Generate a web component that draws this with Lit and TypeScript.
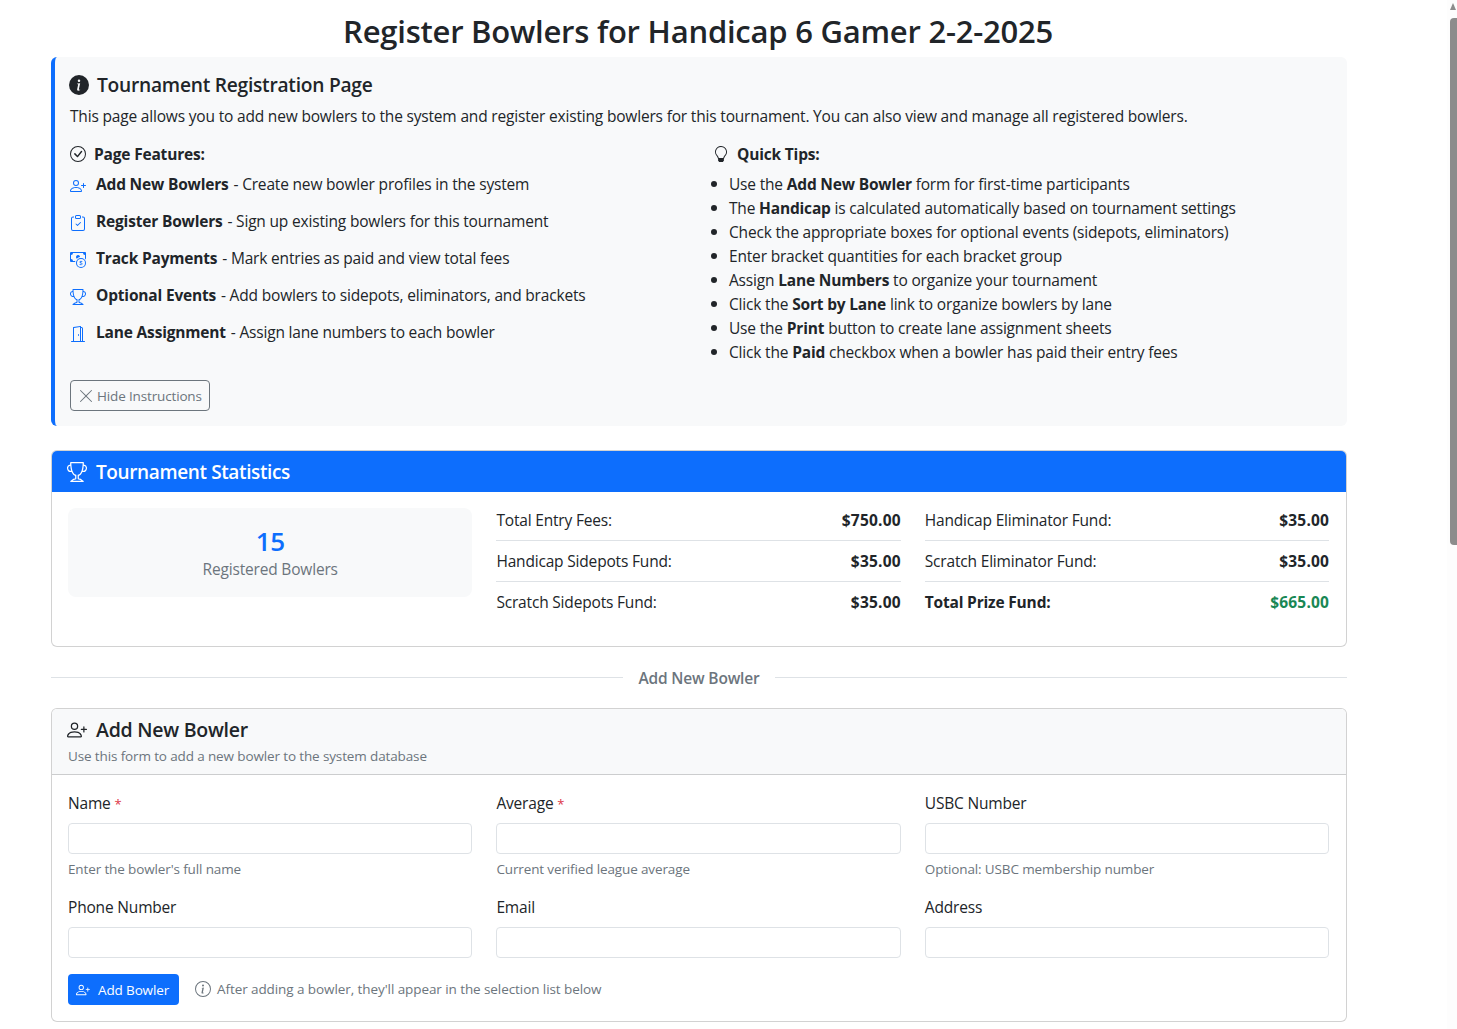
import { LitElement, html, css, svg } from "lit";
import { customElement } from "lit/decorators.js";

const P: Record<string, string[]> = {
  infoFill: ["M8 16A8 8 0 1 0 8 0a8 8 0 0 0 0 16zm.93-9.412-1 4.705c-.07.34.029.533.304.533.194 0 .487-.07.686-.246l-.088.416c-.287.346-.92.598-1.465.598-.703 0-1.002-.422-.808-1.319l.738-3.468c.064-.293.006-.399-.287-.47l-.451-.081.082-.381 2.29-.287zM8 5.5a1 1 0 1 1 0-2 1 1 0 0 1 0 2z"],
  check: ["M8 15A7 7 0 1 1 8 1a7 7 0 0 1 0 14zm0 1A8 8 0 1 0 8 0a8 8 0 0 0 0 16z", "M10.97 4.97a.235.235 0 0 0-.02.022L7.477 9.417 5.384 7.323a.75.75 0 0 0-1.06 1.06L6.97 11.03a.75.75 0 0 0 1.079-.02l3.992-4.99a.75.75 0 0 0-1.071-1.05z"],
  person: ["M6 8a3 3 0 1 0 0-6 3 3 0 0 0 0 6zm2-3a2 2 0 1 1-4 0 2 2 0 0 1 4 0zm4 8c0 1-1 1-1 1H1s-1 0-1-1 1-4 6-4 6 3 6 4zm-1-.004c-.001-.246-.154-.986-.832-1.664C9.516 10.68 8.289 10 6 10c-2.29 0-3.516.68-4.168 1.332-.678.678-.83 1.418-.832 1.664h10z", "M13.5 5a.5.5 0 0 1 .5.5V7h1.5a.5.5 0 0 1 0 1H14v1.5a.5.5 0 0 1-1 0V8h-1.5a.5.5 0 0 1 0-1H13V5.5a.5.5 0 0 1 .5-.5z"],
  clip: ["M10.854 7.146a.5.5 0 0 1 0 .708l-3 3a.5.5 0 0 1-.708 0l-1.5-1.5a.5.5 0 1 1 .708-.708L7.5 9.793l2.646-2.647a.5.5 0 0 1 .708 0z", "M4 1.5H3a2 2 0 0 0-2 2V14a2 2 0 0 0 2 2h10a2 2 0 0 0 2-2V3.5a2 2 0 0 0-2-2h-1v1h1a1 1 0 0 1 1 1V14a1 1 0 0 1-1 1H3a1 1 0 0 1-1-1V3.5a1 1 0 0 1 1-1h1v-1z", "M9.5 1a.5.5 0 0 1 .5.5v1a.5.5 0 0 1-.5.5h-3a.5.5 0 0 1-.5-.5v-1a.5.5 0 0 1 .5-.5h3zm-3-1A1.5 1.5 0 0 0 5 1.5v1A1.5 1.5 0 0 0 6.5 4h3A1.5 1.5 0 0 0 11 2.5v-1A1.5 1.5 0 0 0 9.5 0h-3z"],
  cash: ["M11 15a4 4 0 1 0 0-8 4 4 0 0 0 0 8zm5-4a5 5 0 1 1-10 0 5 5 0 0 1 10 0z", "M9.438 11.944c.047.596.518 1.06 1.363 1.116v.44h.375v-.443c.875-.061 1.386-.529 1.386-1.207 0-.618-.39-.936-1.09-1.1l-.296-.07v-1.2c.376.043.614.248.671.532h.658c-.047-.575-.54-1.024-1.329-1.073V8.5h-.375v.45c-.747.073-1.255.522-1.255 1.158 0 .562.378.92 1.007 1.066l.248.061v1.272c-.384-.058-.639-.27-.696-.563h-.668zm1.36-1.354c-.369-.085-.569-.26-.569-.522 0-.294.216-.514.572-.578v1.1h-.003zm.432.746c.449.104.655.272.655.569 0 .339-.257.571-.709.614v-1.195l.054.012z", "M1 0a1 1 0 0 0-1 1v8a1 1 0 0 0 1 1h4.083c.058-.344.145-.678.258-1H3a2 2 0 0 0-2-2V3a2 2 0 0 0 2-2h10a2 2 0 0 0 2 2v3.528c.38.34.717.728 1 1.154V1a1 1 0 0 0-1-1H1z", "M9.998 5.083 10 5a2 2 0 1 0-3.132 1.65 5.982 5.982 0 0 1 3.13-1.567z"],
  trophy: ["M2.5.5A.5.5 0 0 1 3 0h10a.5.5 0 0 1 .5.5c0 .538-.012 1.05-.034 1.536a3 3 0 1 1-1.133 5.89c-.79 1.865-1.878 2.777-2.833 3.011v2.173l1.425.356c.194.048.377.135.537.255L13.3 15.1a.5.5 0 0 1-.3.9H3a.5.5 0 0 1-.3-.9l1.838-1.379c.16-.12.343-.207.537-.255L6.5 13.11v-2.173c-.955-.234-2.043-1.146-2.833-3.012a3 3 0 1 1-1.132-5.89A33.076 33.076 0 0 1 2.5.5zm.099 2.54a2 2 0 0 0 .72 3.935c-.333-1.05-.588-2.346-.72-3.935zm10.083 3.935a2 2 0 0 0 .72-3.935c-.133 1.59-.388 2.885-.72 3.935zM3.504 1c.007.517.026 1.006.056 1.469.13 2.028.457 3.546.87 4.667C5.294 9.48 6.484 10 7 10a.5.5 0 0 1 .5.5v2.61a1 1 0 0 1-.757.97l-1.426.356a.5.5 0 0 0-.179.085L4.5 15h7l-.638-.479a.501.501 0 0 0-.18-.085l-1.425-.356a1 1 0 0 1-.757-.97V10.5A.5.5 0 0 1 9 10c.516 0 1.706-.52 2.57-2.864.413-1.12.74-2.64.87-4.667.03-.463.049-.952.056-1.469H3.504z"],
  door: ["M8.5 10c-.276 0-.5-.448-.5-1s.224-1 .5-1 .5.448.5 1-.224 1-.5 1z", "M10.828.122A.5.5 0 0 1 11 .5V1h.5A1.5 1.5 0 0 1 13 2.5V15h1.5a.5.5 0 0 1 0 1h-13a.5.5 0 0 1 0-1H3V1.5a.5.5 0 0 1 .43-.495l7-1a.5.5 0 0 1 .398.117zM11.5 2H11v13h1V2.5a.5.5 0 0 0-.5-.5zM4 1.934V15h6V1.077l-6 .857z"],
  bulb: ["M2 6a6 6 0 1 1 10.174 4.31c-.203.196-.359.4-.453.619l-.762 1.769A.5.5 0 0 1 10.5 13a.5.5 0 0 1 0 1 .5.5 0 0 1 0 1l-.224.447a1 1 0 0 1-.894.553H6.618a1 1 0 0 1-.894-.553L5.5 15a.5.5 0 0 1 0-1 .5.5 0 0 1 0-1 .5.5 0 0 1-.46-.302l-.761-1.77a1.964 1.964 0 0 0-.453-.618A5.984 5.984 0 0 1 2 6zm6-5a5 5 0 0 0-3.479 8.592c.263.254.514.564.676.941L5.83 12h4.342l.632-1.467c.162-.377.413-.687.676-.941A5 5 0 0 0 8 1z"],
  x: ["M2.146 2.854a.5.5 0 1 1 .708-.708L8 7.293l5.146-5.147a.5.5 0 0 1 .708.708L8.707 8l5.147 5.146a.5.5 0 0 1-.708.708L8 8.707l-5.146 5.147a.5.5 0 0 1-.708-.708L7.293 8 2.146 2.854Z"],
  info: ["M8 15A7 7 0 1 1 8 1a7 7 0 0 1 0 14zm0 1A8 8 0 1 0 8 0a8 8 0 0 0 0 16z", "m8.93 6.588-2.29.287-.082.38.45.083c.294.07.352.176.288.469l-.738 3.468c-.194.897.105 1.319.808 1.319.545 0 1.178-.252 1.465-.598l.088-.416c-.2.176-.492.246-.686.246-.275 0-.375-.193-.304-.533L8.93 6.588zM9 4.5a1 1 0 1 1-2 0 1 1 0 0 1 2 0z"],
};

const icon = (n: string, size = 16) => html`<svg class="bi" width=${size} height=${size} viewBox="0 0 16 16" fill="currentColor">${P[n].map((d) => svg`<path d=${d}></path>`)}</svg>`;

const features = [
  ["person", "Add New Bowlers", "Create new bowler profiles in the system"],
  ["clip", "Register Bowlers", "Sign up existing bowlers for this tournament"],
  ["cash", "Track Payments", "Mark entries as paid and view total fees"],
  ["trophy", "Optional Events", "Add bowlers to sidepots, eliminators, and brackets"],
  ["door", "Lane Assignment", "Assign lane numbers to each bowler"],
];

const tips = [
  ["Use the ", "Add New Bowler", " form for first-time participants"],
  ["The ", "Handicap", " is calculated automatically based on tournament settings"],
  ["Check the appropriate boxes for optional events (sidepots, eliminators)", "", ""],
  ["Enter bracket quantities for each bracket group", "", ""],
  ["Assign ", "Lane Numbers", " to organize your tournament"],
  ["Click the ", "Sort by Lane", " link to organize bowlers by lane"],
  ["Use the ", "Print", " button to create lane assignment sheets"],
  ["Click the ", "Paid", " checkbox when a bowler has paid their entry fees"],
];

const fields = [
  ["Name", true, "Enter the bowler's full name"],
  ["Average", true, "Current verified league average"],
  ["USBC Number", false, "Optional: USBC membership number"],
  ["Phone Number", false, ""],
  ["Email", false, ""],
  ["Address", false, ""],
] as const;

@customElement("app-root")
export class AppRoot extends LitElement {
  static styles = css`
    :host {
      display: block;
      position: relative;
      width: 1457px;
      height: 1029px;
      overflow: hidden;
      background: #fff;
      color: #212529;
      font-family: "Open Sans", "Noto Sans", sans-serif;
      font-size: 15.5px;
      line-height: 24px;
      letter-spacing: -0.18px;
    }
    * { box-sizing: border-box; }
    .bi { display: block; flex: none; }
    .page {
      width: 1296px;
      margin-left: 51px;
      display: flex;
      flex-direction: column;
    }
    h1 {
      margin: 0;
      font-size: 31px;
      line-height: 38px;
      height: 57px;
      padding: 12px 2px 0 0;
      font-weight: 600;
      text-align: center;
      letter-spacing: -0.23px;
    }
    .alert {
      background: #f8f9fa;
      border-left: 4px solid #0d6efd;
      border-radius: 6px;
      padding: 16px 14px 15px 15px;
      height: 369px;
      margin-bottom: 24px;
    }
    .alert h2 {
      margin: 0;
      display: flex;
      align-items: center;
      gap: 8px;
      font-size: 19.2px;
      line-height: 24px;
      font-weight: 560;
      letter-spacing: -0.25px;
    }
    .alert h2 .bi { margin-left: -1px; }
    .alert .lead { margin: 7px 0 0; }
    .cols {
      display: grid;
      grid-template-columns: 643px 1fr;
      margin-top: 14px;
    }
    .cols h3 {
      margin: 0;
      display: flex;
      align-items: center;
      gap: 8px;
      font-size: 15.5px;
      line-height: 24px;
      font-weight: 700;
    }
    .feat {
      list-style: none;
      margin: 6px 0 0;
      padding: 0;
      display: flex;
      flex-direction: column;
      gap: 13px;
    }
    .feat li { display: flex; align-items: center; gap: 10px; height: 24px; }
    .feat .ic { color: #0d6efd; margin-top: 3px; }
    .feat b { margin-right: 1px; }
    b { font-weight: 700; }
    .tips ul { margin: 6px 0 0; padding-left: 16px; list-style: none; }
    .tips li { position: relative; height: 24px; white-space: nowrap; }
    .tips li::before {
      content: "";
      position: absolute;
      left: -18px;
      top: 9px;
      width: 6px;
      height: 6px;
      border-radius: 50%;
      background: #212529;
    }
    .hide {
      display: inline-flex;
      align-items: center;
      gap: 3px;
      height: 31px;
      width: 140px;
      margin-top: 16px;
      padding: 0 7px;
      border: 1px solid #6c757d;
      border-radius: 4px;
      background: transparent;
      color: #6c757d;
      font: inherit;
      font-size: 13.5px;
      letter-spacing: -0.15px;
      white-space: nowrap;
    }
    .card {
      border: 1px solid rgba(0, 0, 0, 0.175);
      border-radius: 6px;
      overflow: hidden;
      background: #fff;
    }
    .stats-head {
      height: 41px;
      background: #0d6efd;
      color: #fff;
      display: flex;
      align-items: center;
      gap: 9px;
      padding: 0 16px 0 15px;
      font-size: 19px;
      font-weight: 560;
      letter-spacing: -0.375px;
    }
    .stats-body {
      height: 154px;
      padding: 16px;
      display: grid;
      grid-template-columns: repeat(3, 404.4px);
      column-gap: 24px;
      align-items: start;
    }
    .box {
      height: 89px;
      background: #f8f9fa;
      border-radius: 8px;
      display: flex;
      flex-direction: column;
      align-items: center;
      padding-top: 15px;
    }
    .box .num { font-size: 26px; line-height: 36px; font-weight: 600; color: #0d6efd; letter-spacing: -0.4px; }
    .box .lbl { color: #6c757d; line-height: 24px; margin-top: -2px; }
    .row {
      display: flex;
      justify-content: space-between;
      height: 33px;
      margin-bottom: 8px;
      line-height: 24px;
      border-bottom: 1px solid #dee2e6;
    }
    .row:last-child { border-bottom: 0; margin-bottom: 0; }
    .row b:last-child { letter-spacing: 0.2px; }
    .green { color: #198754; }
    .sep {
      display: flex;
      align-items: center;
      gap: 15px;
      height: 61px;
      color: #6c757d;
      font-weight: 600;
      white-space: nowrap;
    }
    .sep::before, .sep::after { content: ""; flex: 1; height: 1px; background: #dee2e6; }
    .form-head {
      height: 66px;
      background: #f8f9fa;
      border-bottom: 1px solid rgba(0, 0, 0, 0.175);
      padding: 9px 16px 0 15px;
    }
    .form-head .t {
      display: flex;
      align-items: center;
      gap: 9px;
      font-size: 19.5px;
      line-height: 24px;
      font-weight: 560;
      letter-spacing: -0.25px;
    }
    .form-head .s { font-size: 13.5px; line-height: 21px; color: #6c757d; margin: 4px 0 0 1px; letter-spacing: -0.13px; }
    .form-body { padding: 16px; height: 246px; }
    .grid {
      display: grid;
      grid-template-columns: repeat(3, 404.4px);
      column-gap: 24px;
    }
    .field { display: flex; flex-direction: column; height: 104px; }
    .field:nth-child(n + 4) { height: 79px; }
    label { display: block; line-height: 24px; height: 32px; }
    .req { color: #dc3545; font-size: 13px; }
    input {
      display: block;
      width: 100%;
      height: 31px;
      border: 1px solid #dee2e6;
      border-radius: 4px;
      background: #fff;
      padding: 0 8px;
    }
    .help { font-size: 13.5px; line-height: 21px; color: #6c757d; margin-top: 5px; letter-spacing: -0.13px; }
    .actions { display: flex; align-items: center; gap: 16px; }
    .btn {
      display: inline-flex;
      align-items: center;
      gap: 8px;
      width: 111px;
      height: 31px;
      padding: 0 8px;
      border: 0;
      border-radius: 4px;
      background: #0d6efd;
      color: #fff;
      font: inherit;
      font-size: 13.5px;
      letter-spacing: -0.13px;
      white-space: nowrap;
    }
    .note { display: flex; align-items: center; gap: 6px; margin-top: -2px; font-size: 13.5px; color: #6c757d; letter-spacing: -0.08px; }
    .scroll {
      position: absolute;
      top: 0;
      right: 0;
      width: 10px;
      height: 100%;
      background: #fdfdfd;
    }
    .scroll .arrow {
      position: absolute;
      top: 3px;
      left: 3px;
      width: 0;
      height: 0;
      border-left: 3.5px solid transparent;
      border-right: 3.5px solid transparent;
      border-bottom: 7px solid #8c8c8c;
    }
    .scroll .thumb {
      position: absolute;
      top: 18px;
      left: 3px;
      width: 7px;
      height: 527px;
      background: #8c8c8c;
      border-radius: 4px 0 0 4px;
    }
  `;

  render() {
    return html`
      <div class="page">
        <h1>Register Bowlers for Handicap 6 Gamer 2-2-2025</h1>
        <section class="alert">
          <h2>${icon("infoFill", 20)}Tournament Registration Page</h2>
          <p class="lead">This page allows you to add new bowlers to the system and register existing bowlers for this tournament. You can also view and manage all registered bowlers.</p>
          <div class="cols">
            <div>
              <h3>${icon("check")}Page Features:</h3>
              <ul class="feat">
                ${features.map(([i, a, b]) => html`<li><span class="ic">${icon(i)}</span><span><b>${a}</b> - ${b}</span></li>`)}
              </ul>
            </div>
            <div class="tips">
              <h3>${icon("bulb")}Quick Tips:</h3>
              <ul>
                ${tips.map(([a, b, c]) => html`<li>${a}${b ? html`<b>${b}</b>` : ""}${c}</li>`)}
              </ul>
            </div>
          </div>
          <button class="hide">${icon("x")}Hide Instructions</button>
        </section>
        <section class="card">
          <div class="stats-head">${icon("trophy", 20)}Tournament Statistics</div>
          <div class="stats-body">
            <div class="box"><div class="num">15</div><div class="lbl">Registered Bowlers</div></div>
            <div>
              <div class="row"><span>Total Entry Fees:</span><b>$750.00</b></div>
              <div class="row"><span>Handicap Sidepots Fund:</span><b>$35.00</b></div>
              <div class="row"><span>Scratch Sidepots Fund:</span><b>$35.00</b></div>
            </div>
            <div>
              <div class="row"><span>Handicap Eliminator Fund:</span><b>$35.00</b></div>
              <div class="row"><span>Scratch Eliminator Fund:</span><b>$35.00</b></div>
              <div class="row"><b>Total Prize Fund:</b><b class="green">$665.00</b></div>
            </div>
          </div>
        </section>
        <div class="sep">Add New Bowler</div>
        <section class="card">
          <div class="form-head">
            <div class="t">${icon("person", 20)}Add New Bowler</div>
            <div class="s">Use this form to add a new bowler to the system database</div>
          </div>
          <div class="form-body">
            <div class="grid">
              ${fields.map(([l, r, h]) => html`<div class="field">
                <label>${l}${r ? html` <span class="req">*</span>` : ""}</label>
                <input type="text" />
                ${h ? html`<div class="help">${h}</div>` : ""}
              </div>`)}
            </div>
            <div class="actions">
              <button class="btn">${icon("person", 14)}Add Bowler</button>
              <span class="note">${icon("info", 16)}After adding a bowler, they'll appear in the selection list below</span>
            </div>
          </div>
        </section>
      </div>
      <div class="scroll"><div class="arrow"></div><div class="thumb"></div></div>
    `;
  }
}
